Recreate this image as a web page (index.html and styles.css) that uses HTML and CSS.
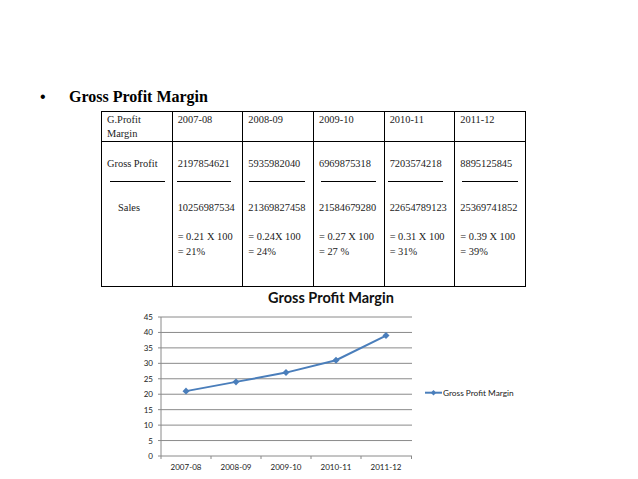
FILE: index.html
```html
<!DOCTYPE html>
<html>
<head>
<meta charset="utf-8">
<link rel="stylesheet" href="styles.css">
</head>
<body>
<div class="slide">
  <div class="heading">
    <span class="bullet">•</span>
    <span class="heading-text">Gross Profit Margin</span>
  </div>
  <table class="gp-table">
    <tr class="head-row">
      <td>G.Profit<br>Margin</td>
      <td>2007-08</td>
      <td>2008-09</td>
      <td>2009-10</td>
      <td>2010-11</td>
      <td>2011-12</td>
    </tr>
    <tr class="body-row">
      <td>
        <div class="num">Gross Profit</div>
        <div class="rule r1"></div>
        <div class="den indent">Sales</div>
      </td>
      <td>
        <div class="num">2197854621</div>
        <div class="rule r2"></div>
        <div class="den">10256987534</div>
        <div class="calc">= 0.21 X 100<br>= 21%</div>
      </td>
      <td>
        <div class="num">5935982040</div>
        <div class="rule r3"></div>
        <div class="den">21369827458</div>
        <div class="calc">= 0.24X 100<br>= 24%</div>
      </td>
      <td>
        <div class="num">6969875318</div>
        <div class="rule r4"></div>
        <div class="den">21584679280</div>
        <div class="calc">= 0.27 X 100<br>= 27 %</div>
      </td>
      <td>
        <div class="num">7203574218</div>
        <div class="rule r5"></div>
        <div class="den">22654789123</div>
        <div class="calc">= 0.31 X 100<br>= 31%</div>
      </td>
      <td>
        <div class="num">8895125845</div>
        <div class="rule r6"></div>
        <div class="den">25369741852</div>
        <div class="calc">= 0.39 X 100<br>= 39%</div>
      </td>
    </tr>
  </table>
  <svg class="chart" width="638" height="192" viewBox="0 287 638 192" xmlns="http://www.w3.org/2000/svg">
    <text class="chart-title" x="331" y="302.5" text-anchor="middle">Gross Profit Margin</text>
    <g class="grid">
      <line x1="161" y1="317" x2="412" y2="317"/>
      <line x1="161" y1="332.44" x2="412" y2="332.44"/>
      <line x1="161" y1="347.89" x2="412" y2="347.89"/>
      <line x1="161" y1="363.33" x2="412" y2="363.33"/>
      <line x1="161" y1="378.78" x2="412" y2="378.78"/>
      <line x1="161" y1="394.22" x2="412" y2="394.22"/>
      <line x1="161" y1="409.67" x2="412" y2="409.67"/>
      <line x1="161" y1="425.11" x2="412" y2="425.11"/>
      <line x1="161" y1="440.56" x2="412" y2="440.56"/>
    </g>
    <g class="axis">
      <line x1="161" y1="317" x2="161" y2="456"/>
      <line x1="158" y1="456" x2="412" y2="456"/>
      <line x1="158" y1="317" x2="161" y2="317"/>
      <line x1="158" y1="332.44" x2="161" y2="332.44"/>
      <line x1="158" y1="347.89" x2="161" y2="347.89"/>
      <line x1="158" y1="363.33" x2="161" y2="363.33"/>
      <line x1="158" y1="378.78" x2="161" y2="378.78"/>
      <line x1="158" y1="394.22" x2="161" y2="394.22"/>
      <line x1="158" y1="409.67" x2="161" y2="409.67"/>
      <line x1="158" y1="425.11" x2="161" y2="425.11"/>
      <line x1="158" y1="440.56" x2="161" y2="440.56"/>
      <line x1="161" y1="456" x2="161" y2="459"/>
      <line x1="211" y1="456" x2="211" y2="459"/>
      <line x1="261" y1="456" x2="261" y2="459"/>
      <line x1="311" y1="456" x2="311" y2="459"/>
      <line x1="361" y1="456" x2="361" y2="459"/>
      <line x1="411.5" y1="456" x2="411.5" y2="459"/>
    </g>
    <g class="ylabels" text-anchor="end">
      <text x="153" y="320">45</text>
      <text x="153" y="335.4">40</text>
      <text x="153" y="350.9">35</text>
      <text x="153" y="366.3">30</text>
      <text x="153" y="381.8">25</text>
      <text x="153" y="397.2">20</text>
      <text x="153" y="412.7">15</text>
      <text x="153" y="428.1">10</text>
      <text x="153" y="443.6">5</text>
      <text x="153" y="459">0</text>
    </g>
    <g class="xlabels" text-anchor="middle">
      <text x="186" y="470">2007-08</text>
      <text x="236" y="470">2008-09</text>
      <text x="286" y="470">2009-10</text>
      <text x="336" y="470">2010-11</text>
      <text x="386" y="470">2011-12</text>
    </g>
    <polyline class="series" points="186,391.13 236,381.87 286,372.6 336,360.24 386,335.53"/>
    <g class="markers">
      <path d="M186 387.6 L189.5 391.13 L186 394.6 L182.5 391.13 Z"/>
      <path d="M236 378.4 L239.5 381.87 L236 385.4 L232.5 381.87 Z"/>
      <path d="M286 369.1 L289.5 372.6 L286 376.1 L282.5 372.6 Z"/>
      <path d="M336 356.7 L339.5 360.24 L336 363.7 L332.5 360.24 Z"/>
      <path d="M386 332 L389.5 335.53 L386 339 L382.5 335.53 Z"/>
    </g>
    <line class="series" x1="425" y1="392.7" x2="442" y2="392.7"/>
    <path class="legend-marker" d="M433.5 390 L436.2 392.7 L433.5 395.4 L430.8 392.7 Z"/>
    <text class="legend-text" x="443" y="395.5">Gross Profit Margin</text>
  </svg>
</div>
</body>
</html>
```

FILE: styles.css
```css
html, body {
  margin: 0;
  padding: 0;
  background: #ffffff;
}

.slide {
  width: 638px;
  height: 479px;
  overflow: hidden;
  padding-top: 87px;
  box-sizing: border-box;
  font-family: "Liberation Serif", "Times New Roman", serif;
  color: #000;
}

.heading {
  display: flex;
  align-items: center;
  height: 20px;
  margin-bottom: 4px;
}

.bullet {
  font-family: "Liberation Sans", Arial, sans-serif;
  font-size: 16px;
  width: 29px;
  padding-left: 40px;
  box-sizing: content-box;
  line-height: 20px;
}

.heading-text {
  font-size: 16px;
  font-weight: bold;
  line-height: 20px;
}

.gp-table {
  margin-left: 101px;
  border-collapse: collapse;
  table-layout: fixed;
  width: 425px;
  font-family: "Liberation Serif", "Times New Roman", serif;
  font-size: 10.4px;
  color: #222;
}

.gp-table td {
  border: 1px solid #000;
  width: 70px;
  vertical-align: top;
  padding: 1px 0 0 5px;
  line-height: 14px;
  box-sizing: border-box;
}

.head-row td {
  height: 30px;
}

.body-row td {
  height: 145px;
  padding-top: 15px;
}

.num {
  height: 14px;
}

.rule {
  height: 0;
  border-top: 1px solid #000;
  margin-top: 10px;
  width: 55px;
}

.r1 { margin-left: 3px; width: 55px; }
.r2 { margin-left: -1px; width: 54px; }
.r3 { margin-left: 1px; width: 56px; }
.r4 { margin-left: 2px; width: 55px; }
.r5 { margin-left: -2px; width: 55px; }
.r6 { margin-left: 2px; width: 56px; }

.den {
  margin-top: 19px;
  height: 14px;
}

.indent {
  padding-left: 11px;
}

.calc {
  margin-top: 14px;
  line-height: 15px;
}

.chart {
  display: block;
  font-family: Lato, "Liberation Sans", sans-serif;
}

.chart-title {
  font-size: 14.5px;
  font-weight: bold;
  fill: #111;
}

.grid line {
  stroke: #8a8a8a;
  stroke-width: 1;
}

.axis line {
  stroke: #8a8a8a;
  stroke-width: 1;
}

.ylabels text,
.xlabels text {
  font-size: 8px;
  fill: #222;
}

.series {
  fill: none;
  stroke: #4a7ebb;
  stroke-width: 2;
  stroke-linejoin: round;
}

.markers path,
.legend-marker {
  fill: #4a7ebb;
}

.legend-text {
  font-size: 8.3px;
  fill: #222;
}
```
